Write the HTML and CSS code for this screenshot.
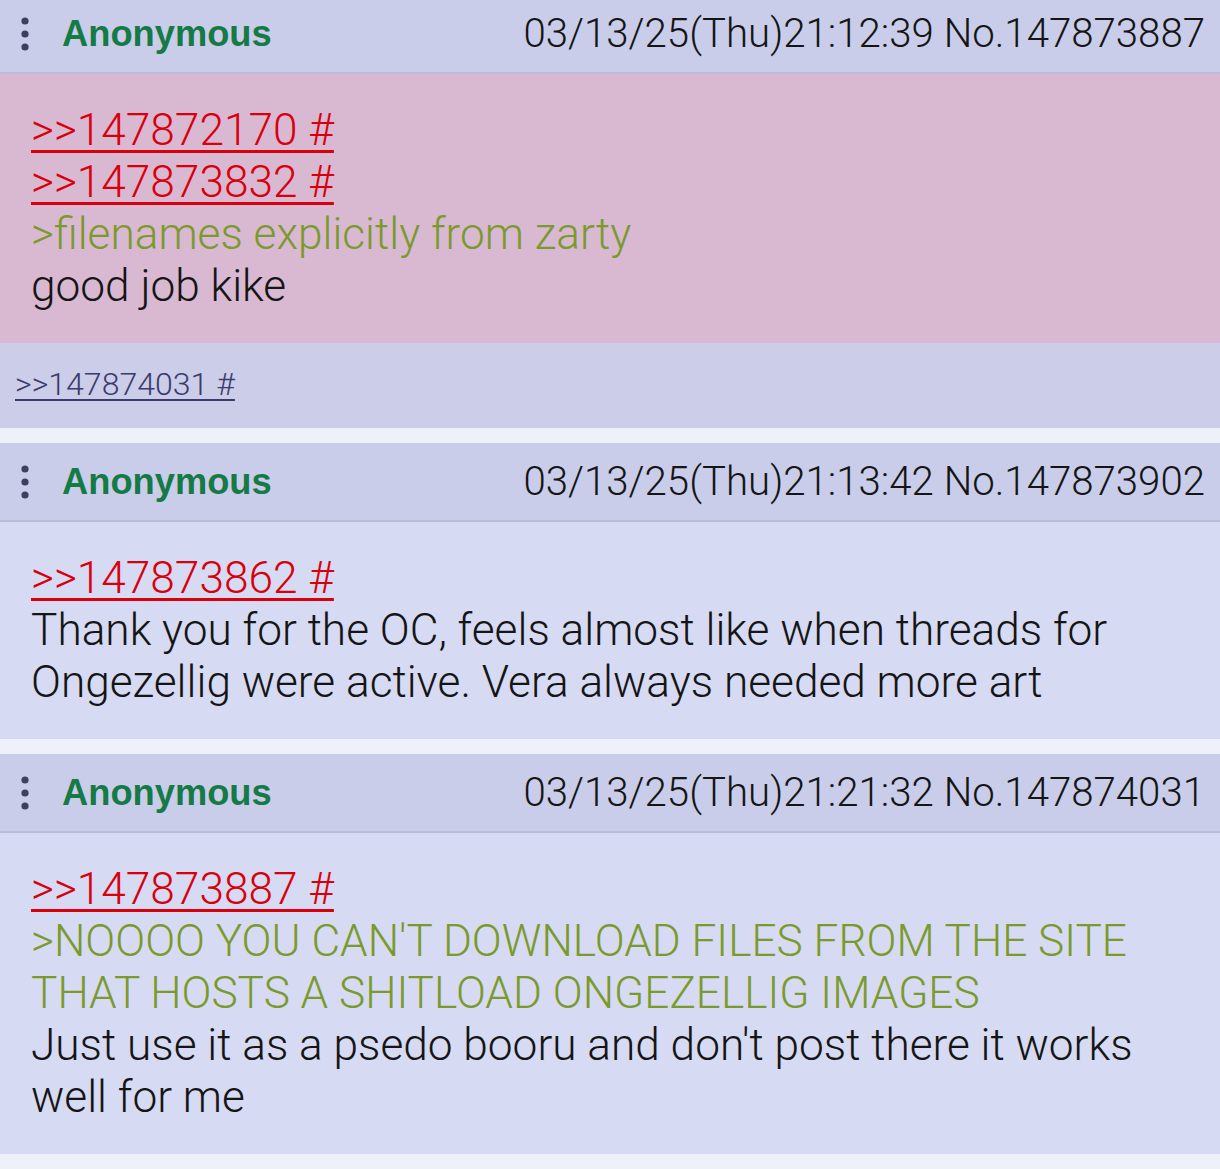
FILE: index.html
```html
<!DOCTYPE html>
<html>
<head>
<meta charset="utf-8">
<link rel="stylesheet" href="styles.css">
</head>
<body>
<div class="thread">
  <div class="post">
    <div class="post-header">
      <span class="menu"><svg width="10" height="34" viewBox="0 0 10 34"><circle cx="5" cy="4" r="3.6"/><circle cx="5" cy="17" r="3.6"/><circle cx="5" cy="30" r="3.6"/></svg></span>
      <span class="name">Anonymous</span>
      <span class="meta">03/13/25(Thu)21:12:39 No.147873887</span>
    </div>
    <div class="post-body highlighted">
      <a class="quotelink">&gt;&gt;147872170 #</a><br>
      <a class="quotelink">&gt;&gt;147873832 #</a><br>
      <span class="greentext">&gt;filenames explicitly from zarty</span><br>
      good job kike
    </div>
    <div class="backlinks"><a class="backlink">&gt;&gt;147874031 #</a></div>
  </div>
  <div class="post">
    <div class="post-header">
      <span class="menu"><svg width="10" height="34" viewBox="0 0 10 34"><circle cx="5" cy="4" r="3.6"/><circle cx="5" cy="17" r="3.6"/><circle cx="5" cy="30" r="3.6"/></svg></span>
      <span class="name">Anonymous</span>
      <span class="meta">03/13/25(Thu)21:13:42 No.147873902</span>
    </div>
    <div class="post-body">
      <a class="quotelink">&gt;&gt;147873862 #</a><br>
      Thank you for the OC, feels almost like when threads for Ongezellig were active. Vera always needed more art
    </div>
  </div>
  <div class="post">
    <div class="post-header">
      <span class="menu"><svg width="10" height="34" viewBox="0 0 10 34"><circle cx="5" cy="4" r="3.6"/><circle cx="5" cy="17" r="3.6"/><circle cx="5" cy="30" r="3.6"/></svg></span>
      <span class="name">Anonymous</span>
      <span class="meta">03/13/25(Thu)21:21:32 No.147874031</span>
    </div>
    <div class="post-body">
      <a class="quotelink">&gt;&gt;147873887 #</a><br>
      <span class="greentext">&gt;NOOOO YOU CAN'T DOWNLOAD FILES FROM THE SITE THAT HOSTS A SHITLOAD ONGEZELLIG IMAGES</span><br>
      Just use it as a psedo booru and don't post there it works well for me
    </div>
  </div>
</div>
</body>
</html>
```

FILE: styles.css
```css
html, body {
  margin: 0;
  padding: 0;
  background: #eef0fa;
}
.thread {
  display: flex;
  flex-direction: column;
  gap: 15px;
  margin-top: -5px;
  font-family: Roboto, "Noto Sans", sans-serif;
}
.post {
  display: flex;
  flex-direction: column;
}
.post-header {
  height: 79px;
  box-sizing: border-box;
  background: #c9cde9;
  border-bottom: 2px solid #b9bdd9;
  display: flex;
  align-items: center;
  padding: 0 15px 0 20px;
}
.menu {
  display: flex;
  align-items: center;
  width: 42px;
  fill: #3f3f62;
}
.menu svg {
  display: block;
}
.name {
  font-family: "Liberation Sans", Arial, sans-serif;
  font-weight: bold;
  font-size: 36.3px;
  color: #157a45;
}
.meta {
  margin-left: auto;
  font-size: 40.2px;
  font-weight: 300;
  color: #151515;
}
.post-body {
  background: #d6daf2;
  padding: 30px 30px 31px 31px;
  font-size: 44.2px;
  font-weight: 300;
  line-height: 52px;
  color: #151515;
}
.post-body.highlighted {
  background: #d9b8d2;
}
.quotelink {
  color: #d9000c;
  text-decoration: underline;
  text-decoration-thickness: 3px;
  text-underline-offset: 5px;
}
.greentext {
  color: #7a9a2b;
}
.backlinks {
  background: #cbcde9;
  height: 85px;
  box-sizing: border-box;
  padding: 22px 15px 0;
  font-size: 32.1px;
  font-weight: 300;
}
.backlink {
  color: #3b3b6b;
  text-decoration: underline;
  text-decoration-thickness: 2px;
  text-underline-offset: 4px;
}
```
